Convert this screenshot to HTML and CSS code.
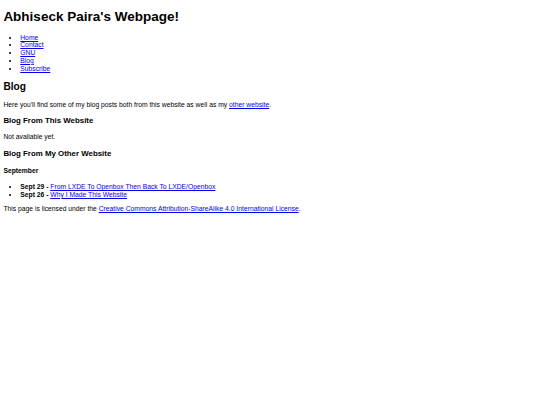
FILE: index.html
```html
<!DOCTYPE html>
<html lang="en">
<head>
<meta charset="utf-8">
<title>Abhiseck Paira's Webpage!</title>
<link rel="stylesheet" href="styles.css">
</head>
<body>
<header class="site-header">
<h1 class="site-title">Abhiseck Paira's Webpage!</h1>
<nav class="site-nav">
<ul class="nav-list">
<li><a href="#">Home</a></li>
<li><a href="#">Contact</a></li>
<li><a href="#">GNU</a></li>
<li><a href="#">Blog</a></li>
<li><a href="#">Subscribe</a></li>
</ul>
</nav>
</header>
<main class="content">
<h2 class="page-title">Blog</h2>
<p>Here you'll find some of my blog posts both from this website as well as my <a href="#">other website</a>.</p>
<h3 class="section-title">Blog From This Website</h3>
<p>Not available yet.</p>
<h3 class="section-title">Blog From My Other Website</h3>
<h4 class="month">September</h4>
<ul class="post-list">
<li><strong>Sept 29 - </strong><a href="#">From LXDE To Openbox Then Back To LXDE/Openbox</a></li>
<li><strong>Sept 26 - </strong><a href="#">Why I Made This Website</a></li>
</ul>
</main>
<footer class="site-footer">
<p>This page is licensed under the <a href="#">Creative Commons Attribution-ShareAlike 4.0 International License</a>.</p>
</footer>
</body>
</html>
```

FILE: styles.css
```css
html {
  background: #ffffff;
}

body {
  margin: 3.375px;
  font-family: "Liberation Sans", Arial, sans-serif;
  font-size: 6.75px;
  line-height: 1.14;
  color: #000000;
}

a {
  color: #0000ee;
}

.site-title {
  font-size: 2em;
  margin: 6px 0 0.67em;
}

.nav-list,
.post-list {
  margin: 1em 0;
  padding-left: 2.5em;
}

.page-title {
  font-size: 1.5em;
  margin: 0.83em 0;
}

.section-title {
  font-size: 1.17em;
  margin: 1em 0;
}

.month {
  font-size: 1em;
  margin: 1.33em 0;
}

p {
  margin: 1em 0;
}
```
